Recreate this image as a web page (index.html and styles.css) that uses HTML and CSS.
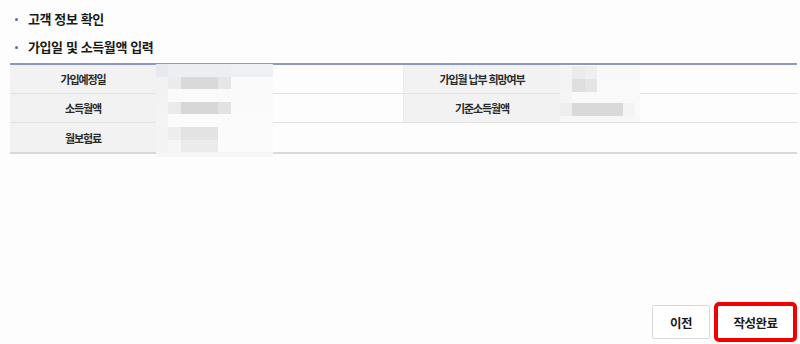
FILE: index.html
```html
<!DOCTYPE html>
<html lang="ko">
<head>
<meta charset="utf-8">
<link rel="stylesheet" href="styles.css">
</head>
<body>
<div class="page">
  <h2 class="sec">고객 정보 확인</h2>
  <h2 class="sec">가입일 및 소득월액 입력</h2>
  <div class="info">
    <div class="lbl">가입예정일</div>
    <div class="val"></div>
    <div class="lbl lbl-r">가입월 납부 희망여부</div>
    <div class="val"></div>

    <div class="lbl">소득월액</div>
    <div class="val"></div>
    <div class="lbl lbl-r">기준소득월액</div>
    <div class="val"></div>

    <div class="lbl last">월보험료</div>
    <div class="val last"></div>
    <div class="val last span2"></div>

    <div class="mosaic m1">
      <div class="r0"></div><div class="r1"></div><div class="r2"></div><div class="r3"></div>
      <div class="r4"></div><div class="r5"></div><div class="r6"></div><div class="r7"></div>
    </div>
    <div class="mosaic m2">
      <div class="s0"></div><div class="s1"></div><div class="s2"></div><div class="s3"></div><div class="s4"></div>
    </div>
  </div>
  <div class="actions">
    <button class="btn">이전</button>
    <button class="btn btn-done">작성완료</button>
  </div>
</div>
</body>
</html>
```
FILE: styles.css
```css
* { box-sizing: border-box; }
html, body { margin: 0; padding: 0; }
body {
  background: #fdfdfd;
  font-family: "Noto Sans CJK KR", "Noto Sans", sans-serif;
  color: #222;
}
.page {
  height: 344px;
  padding-top: 5px;
  display: flex;
  flex-direction: column;
}
.sec {
  margin: 0;
  height: 28px;
  line-height: 28px;
  font-size: 13px;
  font-weight: 700;
  letter-spacing: -0.4px;
  padding-left: 28px;
  position: relative;
  color: #1a1a1a;
}
.sec::before {
  content: "";
  position: absolute;
  left: 15px;
  top: 13px;
  width: 3px;
  height: 3px;
  border-radius: 50%;
  background: #5b6aa3;
}
.info {
  position: relative;
  margin: 2px 3px 0 10px;
  border-top: 2px solid #8b97c4;
  border-bottom: 2px solid #d9d9d9;
  display: grid;
  grid-template-columns: 146px 247px 157px 1fr;
  grid-auto-rows: 29px;
}
.lbl, .val {
  border-bottom: 1px solid #e2e2e2;
}
.lbl {
  background: #f2f2f2;
  font-size: 11px;
  font-weight: 700;
  letter-spacing: -1.1px;
  color: #2a2a2a;
  display: flex;
  align-items: center;
  justify-content: center;
}
.lbl-r { border-left: 1px solid #ebebeb; }
.last { border-bottom: none; }
.span2 { grid-column: span 2; }

.mosaic {
  position: absolute;
  display: flex;
  flex-direction: column;
}
.m1 { left: 146px; top: -1px; width: 117px; }
.m1 div { height: 12.6px; }
.m1 .r0 { background: linear-gradient(to right, #e7e9f0 0 12.5px, #eceef3 12.5px 75px, #eef0f4 75px); }
.m1 .r1 { background: linear-gradient(to right, #f2f2f2 0 12.5px, #ebebeb 12.5px 25px, #d9d9d9 25px 62.5px, #e6e6e6 62.5px 75px, #fafafa 75px); }
.m1 .r2 { background: linear-gradient(to right, #f2f2f2 0 12.5px, #fafafa 12.5px); }
.m1 .r3 { background: linear-gradient(to right, #f3f3f3 0 12.5px, #ebebeb 12.5px 25px, #d7d7d7 25px 62.5px, #e2e2e2 62.5px 75px, #fafafa 75px); }
.m1 .r4 { background: linear-gradient(to right, #f4f4f4 0 12.5px, #fbfbfb 12.5px); }
.m1 .r5 { background: linear-gradient(to right, #f3f3f3 0 12.5px, #ededed 12.5px 25px, #e3e3e3 25px 62.5px, #fbfbfb 62.5px); }
.m1 .r6 { background: linear-gradient(to right, #f3f3f3 0 12.5px, #f6f6f6 12.5px 25px, #ebebeb 25px 62.5px, #fbfbfb 62.5px); }
.m1 .r7 { height: 5px; background: #f6f6f6; }

.m2 { left: 550px; top: 1px; width: 80px; }
.m2 div { height: 12.5px; }
.m2 .s0 { background: linear-gradient(to right, #f4f4f4 0 12px, #ebebeb 12px 25px, #efefef 25px 37px, #f8f8f8 37px); }
.m2 .s1 { height: 13px; background: linear-gradient(to right, #f4f4f4 0 12px, #dedede 12px 25px, #e5e5e5 25px 37px, #f9f9f9 37px); }
.m2 .s2 { height: 11px; background: linear-gradient(to right, #f5f5f5 0 12px, #f9f9f9 12px); }
.m2 .s3 { height: 13px; background: linear-gradient(to right, #eeeeee 0 12px, #d9d9d9 12px 63px, #f4f4f4 63px 75px, #fafafa 75px); }
.m2 .s4 { height: 6px; background: #f7f7f7; }

.actions {
  margin-top: auto;
  padding: 0 6px 5px 0;
  display: flex;
  justify-content: flex-end;
  gap: 7px;
}
.btn {
  height: 34px;
  width: 58px;
  background: #fff;
  border: 1px solid #d9d9d9;
  border-radius: 2px;
  font-family: inherit;
  font-size: 12.5px;
  font-weight: 700;
  letter-spacing: -0.5px;
  color: #1a1a1a;
  padding: 0;
}
.btn-done {
  width: 77px;
  outline: 4px solid #f00000;
  outline-offset: -1px;
}
```
